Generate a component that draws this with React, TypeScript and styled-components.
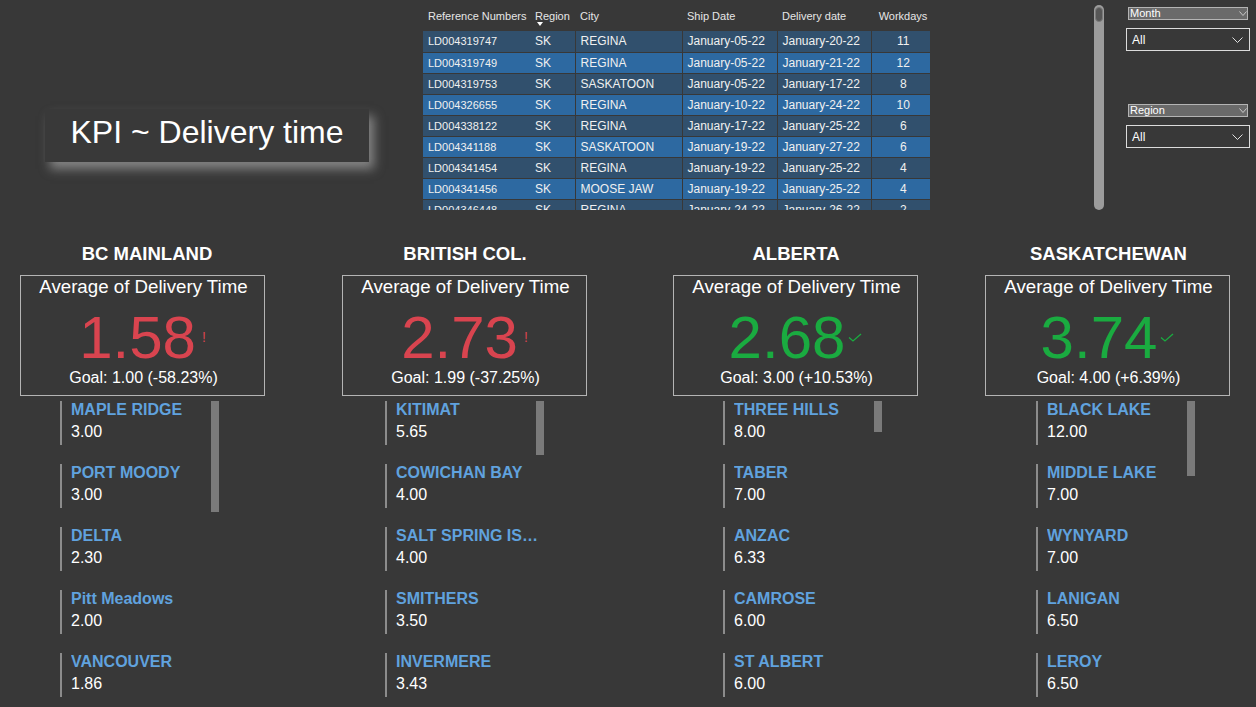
import styled, { createGlobalStyle } from 'styled-components';

const GlobalStyle = createGlobalStyle`
  html, body {
    margin: 0;
    padding: 0;
    background: #383838;
  }
  body {
    font-family: "Liberation Sans", Arial, sans-serif;
    color: #ffffff;
  }
`;

const RED = '#d9444f';
const GREEN = '#1aab40';

const Page = styled.div`
  width: 1256px;
  height: 707px;
  overflow: hidden;
  background: #383838;
`;

const TopBar = styled.div`
  display: flex;
  align-items: flex-start;
  height: 215px;
`;

const TitleBox = styled.div`
  margin: 109px 0 0 45px;
  width: 324px;
  height: 53px;
  padding-bottom: 6px;
  box-sizing: border-box;
  display: flex;
  align-items: center;
  justify-content: center;
  background: #393939;
  box-shadow: 5px 7px 10px rgba(150, 150, 150, 0.8);
  font-size: 32px;
  color: #ffffff;
`;

const TableWrap = styled.div`
  margin-left: 54px;
  width: 507px;
  height: 210px;
  overflow: hidden;
`;

const Table = styled.table`
  width: 507px;
  border-collapse: collapse;
  table-layout: fixed;
`;

const HeadCell = styled.th<{ $w: number; $center?: boolean }>`
  width: ${(p) => p.$w}px;
  height: 31px;
  padding: 0 0 0 5px;
  text-align: ${(p) => (p.$center ? 'center' : 'left')};
  font-size: 11px;
  font-weight: normal;
  color: #e6e6e6;
  vertical-align: middle;
  position: relative;
  box-sizing: border-box;
`;

const SortMark = styled.span`
  position: absolute;
  left: 7px;
  top: 22px;
  width: 0;
  height: 0;
  border-left: 3px solid transparent;
  border-right: 3px solid transparent;
  border-top: 4px solid #ffffff;
`;

const Row = styled.tr<{ $alt: boolean }>`
  background: ${(p) => (p.$alt ? '#2d69a1' : '#31506d')};
  height: 21px;
  border-bottom: 1px solid #383838;
`;

const Cell = styled.td<{ $sep?: boolean; $center?: boolean; $small?: boolean }>`
  padding: 0 0 0 5px;
  height: 20px;
  font-size: ${(p) => (p.$small ? 11 : 12)}px;
  color: #f0f0f0;
  white-space: nowrap;
  overflow: hidden;
  text-align: ${(p) => (p.$center ? 'center' : 'left')};
  border-left: ${(p) => (p.$sep ? '1px solid #383838' : 'none')};
  box-sizing: border-box;
`;

const ScrollTrack = styled.div`
  margin: 5px 0 0 164px;
  width: 10px;
  height: 205px;
  border-radius: 5px;
  background: #9c9c9c;
  padding-top: 2px;
  box-sizing: border-box;
  display: flex;
  justify-content: center;
`;

const ScrollGrip = styled.div`
  width: 8px;
  height: 15px;
  border-radius: 4px;
  background: #565656;
  border: 1px solid #7a7a7a;
  box-sizing: border-box;
`;

const Slicers = styled.div`
  margin: 7px 0 0 22px;
  width: 124px;
  display: flex;
  flex-direction: column;
`;

const SlicerHead = styled.div<{ $top: number }>`
  margin: ${(p) => p.$top}px 0 0 2px;
  width: 120px;
  height: 13px;
  box-sizing: border-box;
  background: #6a6a6a;
  border: 1px solid #b4b4b4;
  font-size: 11px;
  line-height: 11px;
  padding-left: 1px;
  color: #ffffff;
  display: flex;
  align-items: center;
  justify-content: space-between;
`;

const Dropdown = styled.div`
  margin-top: 8px;
  width: 124px;
  height: 23px;
  box-sizing: border-box;
  border: 1px solid #dcdcdc;
  padding: 0 6px 0 5px;
  display: flex;
  align-items: center;
  justify-content: space-between;
  font-size: 12px;
  color: #ffffff;
`;

const Chevron = ({ w, h, c }: { w: number; h: number; c: string }) => (
  <svg width={w} height={h} viewBox={`0 0 ${w} ${h}`}>
    <polyline points={`0.5,0.5 ${w / 2},${h - 0.5} ${w - 0.5},0.5`} fill="none" stroke={c} strokeWidth="1" />
  </svg>
);

const Regions = styled.div`
  display: grid;
  grid-template-columns: 322px 331px 312px 251px;
  padding-left: 20px;
`;

const RegionCol = styled.div`
  display: flex;
  flex-direction: column;
  width: 245px;
`;

const RegionName = styled.div<{ $shift: number }>`
  margin-top: 29px;
  padding-left: ${(p) => p.$shift}px;
  height: 20px;
  line-height: 20px;
  text-align: center;
  font-size: 18.5px;
  font-weight: bold;
  color: #ffffff;
`;

const Card = styled.div`
  margin-top: 11px;
  width: 245px;
  height: 121px;
  box-sizing: border-box;
  border: 1px solid #b4b4b4;
  display: flex;
  flex-direction: column;
  align-items: center;
`;

const CardTitle = styled.div`
  margin-top: 0px;
  padding-left: 2px;
  font-size: 18.7px;
  line-height: 22px;
  color: #ffffff;
`;

const ValueLine = styled.div`
  margin-top: 11px;
  display: flex;
  align-items: center;
  height: 58px;
`;

const BigValue = styled.span<{ $color: string }>`
  font-size: 60px;
  line-height: 58px;
  color: ${(p) => p.$color};
`;

const Alert = styled.span`
  margin-left: 6px;
  margin-bottom: 2px;
  font-size: 14px;
  color: ${RED};
`;

const Goal = styled.div`
  margin-top: 2px;
  padding-left: 2px;
  font-size: 16px;
  line-height: 18px;
  color: #ffffff;
`;

const List = styled.div<{ $offset: number }>`
  position: relative;
  margin: 5px 0 0 ${(p) => p.$offset}px;
`;

const Item = styled.div`
  height: 44px;
  margin-bottom: 19px;
  border-left: 2px solid #8c8c8c;
  padding-left: 9px;
`;

const ItemName = styled.div`
  width: 148px;
  font-size: 16px;
  line-height: 18px;
  font-weight: bold;
  color: #60a2de;
  white-space: nowrap;
  overflow: hidden;
  text-overflow: ellipsis;
`;

const ItemValue = styled.div`
  margin-top: 4px;
  font-size: 16px;
  line-height: 18px;
  color: #ffffff;
`;

const ListThumb = styled.div<{ $h: number }>`
  position: absolute;
  left: 151px;
  top: 0;
  width: 8px;
  height: ${(p) => p.$h}px;
  background: #7a7a7a;
`;

const rows = [
  ['LD004319747', 'SK', 'REGINA', 'January-05-22', 'January-20-22', '11'],
  ['LD004319749', 'SK', 'REGINA', 'January-05-22', 'January-21-22', '12'],
  ['LD004319753', 'SK', 'SASKATOON', 'January-05-22', 'January-17-22', '8'],
  ['LD004326655', 'SK', 'REGINA', 'January-10-22', 'January-24-22', '10'],
  ['LD004338122', 'SK', 'REGINA', 'January-17-22', 'January-25-22', '6'],
  ['LD004341188', 'SK', 'SASKATOON', 'January-19-22', 'January-27-22', '6'],
  ['LD004341454', 'SK', 'REGINA', 'January-19-22', 'January-25-22', '4'],
  ['LD004341456', 'SK', 'MOOSE JAW', 'January-19-22', 'January-25-22', '4'],
  ['LD004346448', 'SK', 'REGINA', 'January-24-22', 'January-26-22', '2'],
];

const columns = [
  { label: 'Reference Numbers', w: 107 },
  { label: 'Region', w: 45 },
  { label: 'City', w: 107 },
  { label: 'Ship Date', w: 95 },
  { label: 'Delivery date', w: 94 },
  { label: 'Workdays', w: 59 },
];

type Region = {
  name: string;
  shift: number;
  value: string;
  good: boolean;
  goal: string;
  offset: number;
  thumb: number;
  cities: [string, string][];
};

const regions: Region[] = [
  {
    name: 'BC MAINLAND',
    shift: 9,
    value: '1.58',
    good: false,
    goal: 'Goal: 1.00 (-58.23%)',
    offset: 40,
    thumb: 111,
    cities: [['MAPLE RIDGE', '3.00'], ['PORT MOODY', '3.00'], ['DELTA', '2.30'], ['Pitt Meadows', '2.00'], ['VANCOUVER', '1.86']],
  },
  {
    name: 'BRITISH COL.',
    shift: 1,
    value: '2.73',
    good: false,
    goal: 'Goal: 1.99 (-37.25%)',
    offset: 43,
    thumb: 54,
    cities: [['KITIMAT', '5.65'], ['COWICHAN BAY', '4.00'], ['SALT SPRING ISLAND', '4.00'], ['SMITHERS', '3.50'], ['INVERMERE', '3.43']],
  },
  {
    name: 'ALBERTA',
    shift: 1,
    value: '2.68',
    good: true,
    goal: 'Goal: 3.00 (+10.53%)',
    offset: 50,
    thumb: 31,
    cities: [['THREE HILLS', '8.00'], ['TABER', '7.00'], ['ANZAC', '6.33'], ['CAMROSE', '6.00'], ['ST ALBERT', '6.00']],
  },
  {
    name: 'SASKATCHEWAN',
    shift: 2,
    value: '3.74',
    good: true,
    goal: 'Goal: 4.00 (+6.39%)',
    offset: 51,
    thumb: 75,
    cities: [['BLACK LAKE', '12.00'], ['MIDDLE LAKE', '7.00'], ['WYNYARD', '7.00'], ['LANIGAN', '6.50'], ['LEROY', '6.50']],
  },
];

const Check = () => (
  <svg width="14" height="10" viewBox="0 0 14 10" style={{ marginLeft: 3 }}>
    <polyline points="1,4.5 5,8 13,1" fill="none" stroke={GREEN} strokeWidth="1.3" />
  </svg>
);

const App = (): JSX.Element => (
  <Page>
    <GlobalStyle />
    <TopBar>
      <TitleBox>KPI ~ Delivery time</TitleBox>

      <TableWrap>
        <Table>
          <thead>
            <tr>
              {columns.map((c, i) => (
                <HeadCell key={c.label} $w={c.w} $center={i === 5}>
                  {c.label}
                  {i === 1 && <SortMark />}
                </HeadCell>
              ))}
            </tr>
          </thead>
          <tbody>
            {rows.map((r, i) => (
              <Row key={r[0]} $alt={i % 2 === 1}>
                {r.map((v, j) => (
                  <Cell key={j} $small={j === 0} $sep={j >= 2} $center={j === 5}>{v}</Cell>
                ))}
              </Row>
            ))}
          </tbody>
        </Table>
      </TableWrap>

      <ScrollTrack>
        <ScrollGrip />
      </ScrollTrack>

      <Slicers>
        <SlicerHead $top={0}>
          Month
          <Chevron w={8} h={5} c="#c8c8c8" />
        </SlicerHead>
        <Dropdown>
          All
          <Chevron w={11} h={6} c="#e0e0e0" />
        </Dropdown>
        <SlicerHead $top={53}>
          Region
          <Chevron w={8} h={5} c="#c8c8c8" />
        </SlicerHead>
        <Dropdown>
          All
          <Chevron w={11} h={6} c="#e0e0e0" />
        </Dropdown>
      </Slicers>
    </TopBar>

    <Regions>
      {regions.map((r) => (
        <RegionCol key={r.name}>
          <RegionName $shift={r.shift}>{r.name}</RegionName>
          <Card>
            <CardTitle>Average of Delivery Time</CardTitle>
            <ValueLine>
              <BigValue $color={r.good ? GREEN : RED}>{r.value}</BigValue>
              {r.good ? <Check /> : <Alert>!</Alert>}
            </ValueLine>
            <Goal>{r.goal}</Goal>
          </Card>
          <List $offset={r.offset}>
            {r.cities.map(([city, val]) => (
              <Item key={city}>
                <ItemName>{city}</ItemName>
                <ItemValue>{val}</ItemValue>
              </Item>
            ))}
            <ListThumb $h={r.thumb} />
          </List>
        </RegionCol>
      ))}
    </Regions>
  </Page>
);

export default App;
